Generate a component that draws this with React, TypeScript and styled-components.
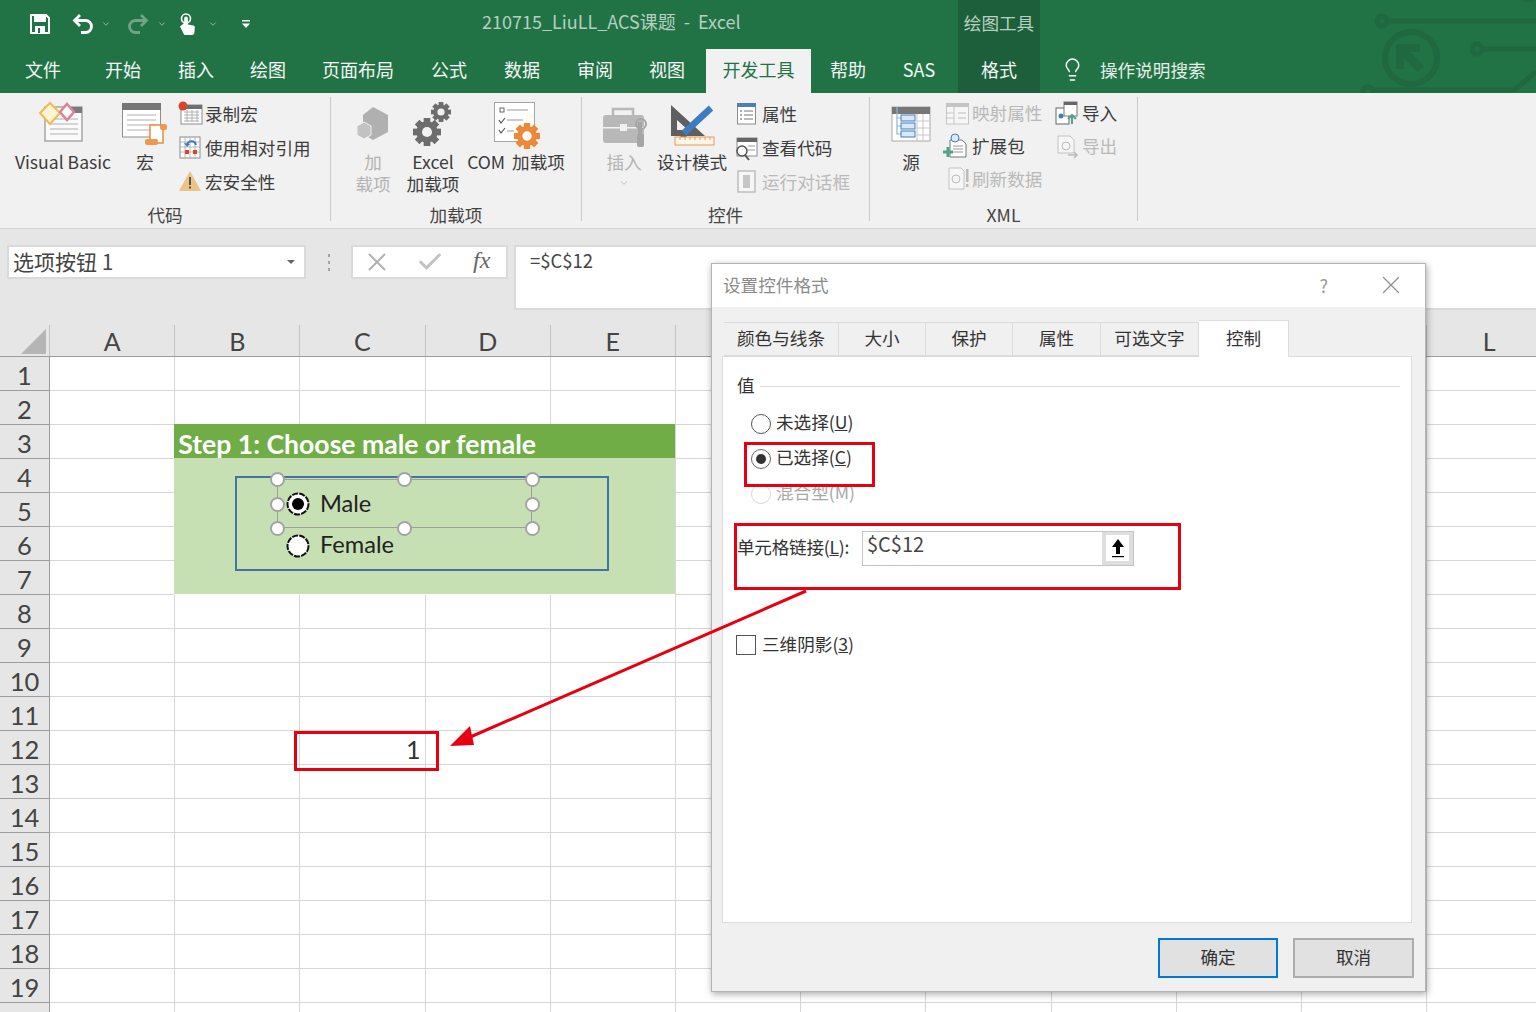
import React from "react";
import styled, { createGlobalStyle } from "styled-components";
import { Lightbulb, X, Check, ChevronDown } from "lucide-react";

const CJK = `"Noto Sans CJK SC", "Noto Sans", sans-serif`;
const SHEET = `Lato, "Noto Sans CJK SC", sans-serif`;

const Global = createGlobalStyle`
  html, body { margin: 0; padding: 0; background: #fff; }
  * { box-sizing: border-box; }
  body { font-family: ${CJK}; overflow: hidden; }
`;

const Page = styled.div`
  position: relative; width: 1536px; height: 1012px; overflow: hidden; background: #fff;
  display: flex; flex-direction: column;
`;

/* ---------- top bar ---------- */
const TopBar = styled.header`
  position: relative; height: 93px; background: #217346; color: #fff; flex: none;
`;
const Circuit = styled.svg`
  position: absolute; left: 1340px; top: 0; width: 196px; height: 93px;
`;
const TitleRow = styled.div`
  position: relative; display: flex; height: 47px;
`;
const Qat = styled.div`
  display: flex; align-items: center; width: 482px; padding-left: 30px;
`;
const QatSlot = styled.span<{ $ml?: number; $dim?: boolean }>`
  display: inline-flex; margin-left: ${p => p.$ml ?? 0}px; opacity: ${p => (p.$dim ? 0.35 : 1)};
`;
const DocTitle = styled.div`
  width: 476px; font-size: 18px; line-height: 47px; color: #b6cfc1; white-space: pre; margin-top: -2px;
`;
const ContextTitle = styled.div`
  width: 82px; background: #1c5f3a; text-align: center; font-size: 17.6px; line-height: 45px; color: #b9cfc2;
`;
const TabRow = styled.nav`
  position: relative; display: flex; height: 46px;
`;
const Tab = styled.div<{ $w?: number; $ml?: number; $active?: boolean; $context?: boolean }>`
  width: ${p => p.$w ?? 72}px; margin-left: ${p => p.$ml ?? 0}px;
  margin-top: ${p => (p.$active ? 2 : 0)}px;
  padding-bottom: ${p => (p.$active ? 4 : 2)}px;
  display: flex; align-items: center; justify-content: center;
  font-size: 18px; color: ${p => (p.$active ? "#217346" : "#f4f7f5")};
  background: ${p => (p.$active ? "#f1f1f1" : p.$context ? "#1c5f3a" : "transparent")};
`;
const TellMe = styled.div`
  display: flex; align-items: center; margin-left: 20px; gap: 15px; font-size: 17.6px; color: #e6eee9; padding-bottom: 2px;
`;

/* ---------- ribbon ---------- */
const Ribbon = styled.section`
  display: flex; height: 136px; flex: none; background: #f1f1f1; border-bottom: 1px solid #d3d3d3; padding-top: 4px;
`;
const Group = styled.div<{ $w: number }>`
  width: ${p => p.$w}px; height: 124px; border-right: 1px solid #c8c8c8; display: flex; flex-direction: column;
`;
const GroupBody = styled.div<{ $pl?: number }>`
  display: flex; flex: none; height: 104px; padding-left: ${p => p.$pl ?? 0}px;
`;
const GroupLabel = styled.div`
  flex: none; text-align: center; font-size: 17.6px; line-height: 24px; color: #444; margin-top: 2px;
`;
const LargeButton = styled.div<{ $w: number; $ml?: number; $off?: boolean; $wide?: boolean }>`
  width: ${p => p.$w}px; margin-left: ${p => p.$ml ?? 0}px; display: flex; flex-direction: column; align-items: center;
  font-size: 17.6px; line-height: 22px; text-align: center; white-space: nowrap; word-spacing: ${p => (p.$wide ? 3 : 0)}px;
  color: ${p => (p.$off ? "#b4b4b4" : "#3c3c3c")};
  svg { display: block; flex: none; }
`;
const MenuChevron = styled.span`
  display: inline-flex; margin-top: 5px;
`;
const SmallColumn = styled.div<{ $ml?: number; $w?: number }>`
  margin-left: ${p => p.$ml ?? 0}px; width: ${p => (p.$w ? `${p.$w}px` : "auto")}; flex: none;
`;
const SmallRow = styled.div<{ $h?: number; $off?: boolean }>`
  display: flex; align-items: center; gap: 1px; height: ${p => p.$h ?? 34}px; font-size: 17.6px; white-space: nowrap;
  padding-bottom: 2px; color: ${p => (p.$off ? "#b9b9b9" : "#3c3c3c")};
  svg { flex: none; margin-top: 2px; }
`;

/* ---------- formula bar ---------- */
const FormulaArea = styled.section`
  display: flex; align-items: flex-start; height: 96px; flex: none; background: #e6e6e6; padding: 16px 0 0 7px;
`;
const NameBox = styled.div`
  display: flex; align-items: center; justify-content: space-between; width: 299px; height: 34px; background: #fff;
  border: 2px solid #dadada; padding: 0 9px 2px 4px; font-size: 21px; color: #444; white-space: pre;
`;
const Caret = styled.span`
  width: 0; height: 0; border-left: 4px solid transparent; border-right: 4px solid transparent; border-top: 4px solid #666; margin-top: 2px;
`;
const Grip = styled.div`
  width: 45px; height: 34px; display: flex; flex-direction: column; align-items: center; justify-content: center; gap: 4px;
  i { width: 2px; height: 3px; background: #a5a5a5; display: block; }
`;
const FxBox = styled.div`
  display: flex; align-items: center; width: 157px; height: 34px; background: #fff; border: 2px solid #dadada; padding-left: 9px;
`;
const FxCheck = styled.span`
  display: inline-flex; margin: 0 29px 0 24px;
`;
const FxText = styled.span`
  font-family: "Liberation Serif", serif; font-style: italic; font-size: 24px; color: #666; padding-bottom: 4px;
`;
const FormulaInput = styled.div`
  flex: 1; margin-left: 6px; height: 65px; background: #fff; border: 2px solid #dadada; border-right: none; padding: 1px 0 0 14px;
  font-size: 18.5px; line-height: 24px; color: #444;
`;

/* ---------- sheet ---------- */
const Sheet = styled.main`
  flex: 1; font-family: ${SHEET}; overflow: hidden;
`;
const HeaderRow = styled.div`
  display: flex; height: 32px; background: #e6e6e6; border-bottom: 1px solid #9c9c9c;
`;
const Corner = styled.div`
  position: relative; flex: 0 0 50px; border-right: 1px solid #c4c4c4;
  &::after {
    content: ""; position: absolute; left: 21px; top: 4px; border-style: solid; border-width: 0 0 25px 25px;
    border-color: transparent transparent #b5b5b5 transparent;
  }
`;
const ColHead = styled.div<{ $first?: boolean }>`
  flex: 0 0 ${p => (p.$first ? 124.2 : 125.2)}px; border-left: ${p => (p.$first ? "none" : "1px solid #c4c4c4")};
  text-align: center; font-size: 25px; line-height: 32px; color: #444;
`;
const Row = styled.div`
  display: flex; height: 34px;
`;
const RowHead = styled.div`
  flex: 0 0 50px; background: #e6e6e6; border-right: 1px solid #9c9c9c; border-bottom: 1px solid #9c9c9c;
  text-align: center; font-size: 25.5px; line-height: 36px; color: #444;
`;
const Cell = styled.div<{ $first?: boolean }>`
  flex: 0 0 ${p => (p.$first ? 124.2 : 125.2)}px; background: #fff;
  border-left: ${p => (p.$first ? "none" : "1px solid #d6d6d6")};
  border-bottom: 1px solid #d6d6d6;
`;
const FilledCell = styled.div<{ $fill: string }>`
  flex: 0 0 500.8px; height: 34px; margin-top: -1px; background: ${p => p.$fill}; white-space: nowrap;
`;
const StepTitle = styled.div`
  color: #fff; font-weight: 700; font-size: 26.6px; line-height: 40px; padding-left: 4px;
`;
const NumberCell = styled.div`
  text-align: right; padding-right: 4px; font-size: 25px; line-height: 36px; color: #333;
`;

/* ---------- form controls on the sheet ---------- */
const FormFrame = styled.div`
  position: absolute; left: 235px; top: 476px; width: 374px; height: 95px; border: 2px solid #41749f;
`;
const SelectionFrame = styled.div`
  position: absolute; left: 277px; top: 479px; width: 255px; height: 49px; border: 1.5px solid #9f9f9f;
`;
const Handle = styled.span<{ $x: number; $y: number }>`
  position: absolute; left: ${p => p.$x - 7.5}px; top: ${p => p.$y - 7.5}px; width: 15px; height: 15px; border-radius: 50%;
  background: #fff; border: 2.5px solid #a3a3a3;
`;
const SheetRadio = styled.svg<{ $y: number }>`
  position: absolute; left: 286px; top: ${p => p.$y - 12}px; width: 24px; height: 24px;
`;
const SheetLabel = styled.span<{ $y: number }>`
  position: absolute; left: 320px; top: ${p => p.$y - 18}px; font-family: ${SHEET}; font-size: 23.6px; line-height: 34px; color: #222;
`;

/* ---------- dialog ---------- */
const Dialog = styled.div`
  position: absolute; left: 711px; top: 263px; width: 715px; height: 729px; background: #f0f0f0;
  border: 1px solid #b4b4b4; box-shadow: 1px 2px 7px rgba(0,0,0,.35); display: flex; flex-direction: column;
`;
const DialogTitle = styled.div`
  display: flex; align-items: center; height: 43px; background: #fff; padding: 0 0 2px 11px; font-size: 17.6px; color: #8b8b8b; flex: none;
`;
const DialogGlyphs = styled.div`
  margin-left: auto; display: flex; align-items: center; gap: 48px; padding-right: 19px; color: #9a9a9a; font-size: 18px;
`;
const DialogTabs = styled.div`
  display: flex; height: 35px; margin: 14px 0 0 12px; flex: none; align-items: flex-end;
`;
const DialogTab = styled.div<{ $w: number; $active?: boolean }>`
  width: ${p => p.$w}px; height: ${p => (p.$active ? 37 : 34)}px; display: flex; align-items: center; justify-content: center;
  background: ${p => (p.$active ? "#fff" : "#f0f0f0")}; font-size: 17.6px; color: #333; padding-bottom: 4px;
  border: 1px solid #dcdcdc; border-left: none; border-bottom: ${p => (p.$active ? "none" : "1px solid #dcdcdc")};
  position: relative; z-index: ${p => (p.$active ? 1 : 0)}; margin-bottom: ${p => (p.$active ? -1 : 0)}px;
`;
const Panel = styled.div`
  height: 567px; margin: 0 13px 0 10px; background: #fff; border: 1px solid #dcdcdc; padding: 17px 11px 0 14px; flex: none;
`;
const Legend = styled.div`
  display: flex; align-items: center; gap: 5px; height: 24px; font-size: 17.6px; color: #333;
  span { margin-bottom: 4px; }
  &::after { content: ""; flex: 1; height: 1px; background: #dcdcdc; }
`;
const RadioList = styled.div`
  margin: 8px 0 0 14px;
`;
const RadioRow = styled.div<{ $off?: boolean }>`
  display: flex; align-items: center; gap: 5px; height: 35px; font-size: 17.6px; color: ${p => (p.$off ? "#a8a8a8" : "#333")};
  span:last-child { margin-bottom: 4px; }
`;
const RadioDot = styled.span<{ $on?: boolean; $off?: boolean }>`
  width: 20px; height: 20px; border-radius: 50%; background: #fff; flex: none;
  border: 1.5px solid ${p => (p.$off ? "#d8d8d8" : p.$on ? "#666" : "#555")};
  display: flex; align-items: center; justify-content: center;
  &::after { content: ""; width: 10px; height: 10px; border-radius: 50%; background: ${p => (p.$on ? "#333" : "transparent")}; }
`;
const LinkRow = styled.div`
  display: flex; align-items: center; margin-top: 20px; height: 35px; font-size: 17.6px; color: #333; white-space: nowrap;
`;
const LinkLabel = styled.span`
  width: 125px; flex: none; margin-bottom: 4px; letter-spacing: -0.25px;
`;
const LinkInput = styled.div`
  display: flex; width: 272px; height: 35px; border: 1.5px solid #c4c4c4; background: #fff; font-size: 20px; line-height: 24px;
`;
const LinkValue = styled.span`
  flex: 1; padding-left: 4px; color: #444;
`;
const PickButton = styled.span`
  width: 31px; background: #fff; border: 4px solid #dedede; border-top-width: 3px; display: flex; align-items: center; justify-content: center;
`;
const CheckRow = styled.div`
  display: flex; align-items: center; gap: 6px; margin: 69px 0 0 -1px; height: 20px; font-size: 17.6px; color: #333;
  span:last-child { margin-bottom: 3px; }
`;
const CheckBox = styled.span`
  width: 20px; height: 20px; background: #fff; border: 1.5px solid #555; flex: none;
`;
const DialogFooter = styled.div`
  display: flex; justify-content: flex-end; gap: 15px; padding: 15px 11px 0 0;
`;
const DialogButton = styled.div<{ $primary?: boolean; $w: number }>`
  width: ${p => p.$w}px; height: 40px; display: flex; align-items: center; justify-content: center; background: #e1e1e1; padding-bottom: 3px;
  border: 2px solid ${p => (p.$primary ? "#0078d7" : "#adadad")}; font-size: 17.6px; color: #333;
`;

/* ---------- annotations ---------- */
const RedBox = styled.div<{ $x: number; $y: number; $w: number; $h: number }>`
  position: absolute; left: ${p => p.$x}px; top: ${p => p.$y}px; width: ${p => p.$w}px; height: ${p => p.$h}px;
  border: 3px solid #e60012; pointer-events: none;
`;
const ArrowLayer = styled.svg`
  position: absolute; left: 0; top: 0; width: 1536px; height: 1012px; pointer-events: none;
`;

/* ---------- icon helpers: drawn in page coordinates ---------- */
const Ic: React.FC<{ x: number; y: number; w: number; h: number; children: React.ReactNode }> = ({ x, y, w, h, children }) => (
  <svg width={w} height={h} viewBox={`${x} ${y} ${w} ${h}`} style={{ overflow: "visible" }}>{children}</svg>
);
const Gear: React.FC<{ cx: number; cy: number; r: number; fill: string; hole: string }> = ({ cx, cy, r, fill, hole }) => (
  <g>
    {[0, 45, 90, 135].map(a => (
      <rect key={a} x={cx - r * 0.24} y={cy - r} width={r * 0.48} height={r * 2} fill={fill} transform={`rotate(${a} ${cx} ${cy})`} />
    ))}
    <circle cx={cx} cy={cy} r={r * 0.76} fill={fill} />
    <circle cx={cx} cy={cy} r={r * 0.36} fill={hole} />
  </g>
);
const Lines: React.FC<{ x1: number; x2: number; ys: number[]; c?: string }> = ({ x1, x2, ys, c = "#b0b0b0" }) => (
  <>{ys.map(y => <line key={y} x1={x1} x2={x2} y1={y} y2={y} stroke={c} strokeWidth="1" />)}</>
);
const QatChevron = () => <ChevronDown size={10} strokeWidth={2} color="#a9c5b5" />;

const SaveIcon = () => (
  <svg width="20" height="20" viewBox="0 0 20 20">
    <path d="M1 1h15l3 3v15H1z" fill="none" stroke="#fff" strokeWidth="2" />
    <rect x="4" y="2" width="12" height="6" fill="#fff" />
    <rect x="5" y="12" width="10" height="7" fill="#fff" />
    <rect x="8" y="14" width="2" height="5" fill="#217346" />
  </svg>
);
const UndoIcon = () => (
  <svg width="22" height="22" viewBox="0 0 22 22">
    <path d="M8 2L2.5 7.5 8 13M3 7.5h10.5a6 6 0 0 1 0 12H9" fill="none" stroke="#fff" strokeWidth="2.8" />
  </svg>
);
const RedoIcon = () => (
  <svg width="22" height="22" viewBox="0 0 22 22">
    <path d="M14 2l5.5 5.5L14 13M19 7.5H8.500a6 6 0 0 0 0 12H13" fill="none" stroke="#fff" strokeWidth="2.8" />
  </svg>
);
const TouchIcon = () => (
  <svg width="18" height="22" viewBox="0 0 18 22">
    <circle cx="8" cy="5.5" r="4.5" fill="none" stroke="#fff" strokeWidth="1.6" />
    <rect x="6.2" y="3.5" width="3.6" height="11" rx="1.8" fill="#fff" />
    <path d="M6.200 10L2 13.500 5.500 20.500c.4 1 1.200 1.500 2.200 1.500h6.300c1.300 0 2.300-1 2.400-2.200l.4-5.300c.1-1-.5-1.800-1.500-2l-5.500-1z" fill="#fff" />
  </svg>
);

const tabs = [
  { t: "文件", ml: 7 }, { t: "开始", ml: 8 }, { t: "插入", ml: 1 }, { t: "绘图" }, { t: "页面布局", w: 90, ml: 9 },
  { t: "公式", ml: 10 }, { t: "数据", ml: 1 }, { t: "审阅", ml: 1 }, { t: "视图" },
];
const columns = "ABCDEFGHIJKL".split("");
const rows = Array.from({ length: 20 }, (_, i) => i + 1);
const handles: [number, number][] = [[277, 479], [404, 479], [532, 479], [277, 504], [532, 504], [277, 528], [404, 528], [532, 528]];

const SheetRow: React.FC<{ n: number }> = ({ n }) => {
  const filled = n >= 3 && n <= 7;
  return (
    <Row>
      <RowHead>{n < 20 ? n : null}</RowHead>
      <Cell $first />
      {filled ? (
        <FilledCell $fill={n === 3 ? "#70ad47" : "#c6e0b4"}>
          {n === 3 && <StepTitle>Step 1: Choose male or female</StepTitle>}
        </FilledCell>
      ) : (
        <>
          <Cell />
          <Cell>{n === 12 && <NumberCell>1</NumberCell>}</Cell>
          <Cell />
          <Cell />
        </>
      )}
      {columns.slice(5).map(c => <Cell key={c} />)}
    </Row>
  );
};

const RadioMark: React.FC<{ y: number; on?: boolean }> = ({ y, on }) => (
  <SheetRadio $y={y} viewBox="0 0 24 24">
    <circle cx="12" cy="12" r="10.5" fill="#fff" stroke="#111" strokeWidth="2" strokeDasharray="6 1.2" />
    {on && <circle cx="12" cy="12" r="6" fill="#000" />}
  </SheetRadio>
);

export default function App() {
  return (
    <Page>
      <Global />
      <TopBar>
        <Circuit viewBox="1340 0 196 93">
          <g fill="none" stroke="#1f6840" strokeWidth="5">
            <circle cx="1382" cy="21" r="5" />
            <path d="M1387 21H1536" />
            <circle cx="1477" cy="49" r="5" />
            <path d="M1482 49H1536" />
            <circle cx="1368" cy="92" r="5" />
            <path d="M1373 90H1514L1536 72" />
            <circle cx="1411" cy="58" r="26" strokeWidth="6" />
            <circle cx="1528" cy="-9" r="9" />
          </g>
          <path d="M1396 44h24v8h-10l14 14-6 6-14-14v11h-8z" fill="#1f6840" />
        </Circuit>
        <TitleRow>
          <Qat>
            <QatSlot><SaveIcon /></QatSlot>
            <QatSlot $ml={22}><UndoIcon /></QatSlot>
            <QatSlot $ml={7}><QatChevron /></QatSlot>
            <QatSlot $ml={16} $dim><RedoIcon /></QatSlot>
            <QatSlot $ml={8}><QatChevron /></QatSlot>
            <QatSlot $ml={11}><TouchIcon /></QatSlot>
            <QatSlot $ml={12}><QatChevron /></QatSlot>
            <QatSlot $ml={23}>
              <svg width="10" height="10" viewBox="0 0 10 10"><rect x="1" y="1" width="8" height="1.5" fill="#fff" /><path d="M1 4.5h8L5 9z" fill="#fff" /></svg>
            </QatSlot>
          </Qat>
          <DocTitle>{"210715_LiuLL_ACS课题  -  Excel"}</DocTitle>
          <ContextTitle>绘图工具</ContextTitle>
        </TitleRow>
        <TabRow>
          {tabs.map(t => <Tab key={t.t} $w={t.w} $ml={t.ml}>{t.t}</Tab>)}
          <Tab $w={105} $ml={3} $active>开发工具</Tab>
          <Tab $ml={1}>帮助</Tab>
          <Tab $w={70}>SAS</Tab>
          <Tab $w={82} $ml={4} $context>格式</Tab>
          <TellMe>
            <Lightbulb size={25} strokeWidth={1.4} color="#fff" />
            操作说明搜索
          </TellMe>
        </TabRow>
      </TopBar>

      <Ribbon>
        <Group $w={331}>
          <GroupBody $pl={5}>
            <LargeButton $w={116}>
              <Ic x={5} y={97} w={116} h={54}>
                <rect x="45" y="107" width="37" height="34" fill="#fafafa" stroke="#a6a6a6" strokeWidth="1.5" />
                <rect x="68" y="107" width="14" height="6" fill="#7a7a7a" />
                <Lines x1={50} x2={78} ys={[119, 124, 129, 134]} />
                <polygon points="50,103 60,113 50,124 40,113" fill="#fff4d2" stroke="#eabc58" strokeWidth="2" />
                <polygon points="67,104 74,112 67,120 60,112" fill="#fff" stroke="#e27f99" strokeWidth="2.5" />
              </Ic>
              Visual Basic
            </LargeButton>
            <LargeButton $w={48}>
              <Ic x={121} y={97} w={48} h={54}>
                <rect x="122.5" y="104" width="38" height="33" fill="#fff" stroke="#8f8f8f" />
                <rect x="122" y="103" width="39" height="7" fill="#767676" />
                <Lines x1={127} x2={156} ys={[115, 120, 125, 130]} />
                <rect x="150" y="125" width="13" height="18" fill="#fff" stroke="#ed8b3c" strokeWidth="1.5" />
                <rect x="145" y="139" width="13" height="6" rx="2" fill="#ed9a4d" />
                <rect x="160" y="124" width="7" height="6" rx="2" fill="#ed9a4d" />
              </Ic>
              宏
            </LargeButton>
            <SmallColumn $ml={9}>
              <SmallRow>
                <Ic x={178} y={97} w={26} h={34}>
                  <rect x="181" y="105" width="21" height="19" fill="#fff" stroke="#8c8c8c" />
                  <rect x="181" y="105" width="21" height="4" fill="#6f6f6f" />
                  <Lines x1={184} x2={199} ys={[112, 115, 118, 121]} />
                  <path d="M187 110v12M192 110v12M197 110v12" stroke="#b0b0b0" />
                  <circle cx="183" cy="106" r="4.5" fill="#d8452a" />
                </Ic>
                录制宏
              </SmallRow>
              <SmallRow>
                <Ic x={178} y={131} w={26} h={34}>
                  <rect x="180" y="137" width="20" height="21" fill="#fff" stroke="#8c8c8c" />
                  <path d="M185 137v21M190 137v21M195 137v21M180 142h20M180 147h20M180 152h20" stroke="#a8a8a8" strokeWidth=".8" />
                  <rect x="185" y="150" width="4" height="4" fill="#d8452a" />
                  <rect x="193" y="150" width="4" height="4" fill="#d8452a" />
                  <path d="M187 145c1-5 8-5 9 0" fill="none" stroke="#3e7cc0" strokeWidth="2" />
                  <path d="M184 143l3 4 3-3z" fill="#3e7cc0" />
                </Ic>
                使用相对引用
              </SmallRow>
              <SmallRow>
                <Ic x={178} y={165} w={26} h={34}>
                  <path d="M190 171l11 20h-22z" fill="#eac488" />
                  <rect x="189" y="177" width="2" height="8" fill="#555" />
                  <rect x="189" y="186.5" width="2" height="2" fill="#555" />
                </Ic>
                宏安全性
              </SmallRow>
            </SmallColumn>
          </GroupBody>
          <GroupLabel>代码</GroupLabel>
        </Group>

        <Group $w={251}>
          <GroupBody $pl={20}>
            <LargeButton $w={44} $off>
              <Ic x={351} y={97} w={44} h={54}>
                <path d="M373 107l15 8v17l-15 8-10-6v-19z" fill="#b0b0b0" />
                <path d="M364 122l7 4v9l-7 4-7-4v-9z" fill="#c2c2c2" stroke="#f1f1f1" />
              </Ic>
              加<br />载项
            </LargeButton>
            <LargeButton $w={60} $ml={8}>
              <Ic x={403} y={97} w={60} h={54}>
                <Gear cx={427} cy={132} r={14} fill="#6d6d6d" hole="#f1f1f1" />
                <Gear cx={441} cy={112} r={10} fill="#6d6d6d" hole="#f1f1f1" />
              </Ic>
              Excel<br />加载项
            </LargeButton>
            <LargeButton $w={106} $wide>
              <Ic x={463} y={97} w={106} h={54}>
                <rect x="494.5" y="102.5" width="40" height="39" fill="#fff" stroke="#a5a5a5" />
                <rect x="500" y="108" width="4" height="4" fill="none" stroke="#666" />
                <Lines x1={507} x2={528} ys={[110]} c="#999" />
                <path d="M499 120l2 3 4-5M499 130l2 3 4-5" fill="none" stroke="#555" strokeWidth="1.2" />
                <Lines x1={507} x2={523} ys={[120]} c="#999" />
                <Lines x1={507} x2={514} ys={[131]} c="#999" />
                <Gear cx={527} cy={136} r={13} fill="#ed8936" hole="#fff" />
              </Ic>
              COM 加载项
            </LargeButton>
          </GroupBody>
          <GroupLabel>加载项</GroupLabel>
        </Group>

        <Group $w={288}>
          <GroupBody $pl={16}>
            <LargeButton $w={52} $off>
              <Ic x={598} y={97} w={52} h={54}>
                <rect x="603" y="115" width="41" height="28" rx="3" fill="#b8b8b8" />
                <path d="M613 115v-6h20v6" fill="none" stroke="#b8b8b8" strokeWidth="2.5" />
                <rect x="603" y="127" width="41" height="1.5" fill="#f1f1f1" />
                <rect x="620" y="124" width="7" height="7" fill="#f1f1f1" />
                <path d="M640 122v16" stroke="#a5a5a5" strokeWidth="4" />
                <circle cx="641" cy="124" r="5" fill="none" stroke="#a5a5a5" strokeWidth="2" />
                <rect x="637" y="134" width="7" height="13" rx="2" fill="#a5a5a5" />
              </Ic>
              插入
              <MenuChevron><ChevronDown size={10} color="#b4b4b4" /></MenuChevron>
            </LargeButton>
            <LargeButton $w={80} $ml={2}>
              <Ic x={652} y={97} w={80} h={54}>
                <path fillRule="evenodd" d="M671 105l34 31h-34zM677 120v10h11z" fill="#5f5f5f" />
                <path d="M684 133l27-25" stroke="#3e7cc0" strokeWidth="6.5" />
                <path d="M679 141l3-9 6 6z" fill="#5f5f5f" />
                <rect x="675" y="137" width="39" height="8" fill="#fff4e8" stroke="#ec9a55" />
                <path d="M680 137v3M685 137v3M690 137v3M695 137v3M700 137v3M705 137v3M710 137v3" stroke="#ec9a55" />
              </Ic>
              设计模式
            </LargeButton>
            <SmallColumn $ml={3}>
              <SmallRow>
                <Ic x={735} y={97} w={26} h={34}>
                  <rect x="737.5" y="104" width="18" height="20" fill="#fff" stroke="#8c8c8c" />
                  <rect x="737" y="103" width="19" height="4" fill="#4c7fb8" />
                  <Lines x1={744} x2={753} ys={[111, 115, 119]} c="#777" />
                  <path d="M740 111h2M740 115h2M740 119h2" stroke="#555" />
                </Ic>
                属性
              </SmallRow>
              <SmallRow>
                <Ic x={735} y={131} w={26} h={34}>
                  <rect x="737" y="138" width="20" height="18" fill="#fff" stroke="#8c8c8c" />
                  <rect x="737" y="138" width="20" height="4" fill="#666" />
                  <Lines x1={748} x2={755} ys={[146, 150]} c="#999" />
                  <circle cx="742" cy="151" r="5" fill="#fff" stroke="#555" strokeWidth="1.5" />
                  <path d="M745 155l4 5" stroke="#555" strokeWidth="2" />
                </Ic>
                查看代码
              </SmallRow>
              <SmallRow $off>
                <Ic x={735} y={165} w={26} h={34}>
                  <rect x="738" y="171" width="17" height="21" fill="#f6f6f6" stroke="#bdbdbd" strokeWidth="1.5" />
                  <rect x="743" y="175" width="7" height="13" fill="#c6c6c6" />
                </Ic>
                运行对话框
              </SmallRow>
            </SmallColumn>
          </GroupBody>
          <GroupLabel>控件</GroupLabel>
        </Group>

        <Group $w={268}>
          <GroupBody $pl={15}>
            <LargeButton $w={52}>
              <Ic x={885} y={97} w={52} h={54}>
                <rect x="892" y="107" width="38" height="34" fill="#fff" stroke="#aaa" />
                <rect x="892" y="107" width="38" height="7" fill="#777" />
                <path d="M917 114v27M923 114v27M917 121h13M917 128h13M917 135h13" stroke="#c8c8c8" />
                <path d="M897 107v27h4M897 118h4M897 126h4" fill="none" stroke="#8fb4da" strokeWidth="1.2" />
                <rect x="901" y="115" width="14" height="6" fill="#dbe8f5" stroke="#3f7fc1" />
                <rect x="901" y="123" width="14" height="6" fill="#dbe8f5" stroke="#3f7fc1" />
                <rect x="901" y="131" width="14" height="6" fill="#dbe8f5" stroke="#3f7fc1" />
              </Ic>
              源
            </LargeButton>
            <SmallColumn $ml={8} $w={110}>
              <SmallRow $h={33} $off>
                <Ic x={945} y={97} w={26} h={33}>
                  <rect x="946.5" y="104" width="22" height="20" fill="#f6f6f6" stroke="#c6c6c6" />
                  <rect x="946" y="103" width="23" height="4" fill="#c4c4c4" />
                  <path d="M954 107v17M946 113h8M946 118h8" stroke="#c6c6c6" />
                  <path d="M958 113h8M958 118h8" stroke="#bbb" />
                </Ic>
                映射属性
              </SmallRow>
              <SmallRow $h={33}>
                <Ic x={945} y={130} w={26} h={33}>
                  <path d="M950 140h12l4 4v13h-16z" fill="#fff" stroke="#777" />
                  <Lines x1={953} x2={963} ys={[146, 149, 152]} c="#999" />
                  <circle cx="955" cy="138" r="4" fill="#dbe8f5" stroke="#3f7fc1" />
                  <path d="M948 147v10M943 152h10" stroke="#55a18a" strokeWidth="3" />
                </Ic>
                扩展包
              </SmallRow>
              <SmallRow $h={33} $off>
                <Ic x={945} y={163} w={26} h={33}>
                  <path d="M949 168h12l3 3v18h-15z" fill="#f6f6f6" stroke="#c2c2c2" />
                  <circle cx="956" cy="179" r="4" fill="none" stroke="#bbb" />
                  <rect x="966" y="169" width="2.5" height="13" fill="#bbb" />
                  <rect x="966" y="184" width="2.5" height="3" fill="#bbb" />
                </Ic>
                刷新数据
              </SmallRow>
            </SmallColumn>
            <SmallColumn>
              <SmallRow $h={33}>
                <Ic x={1055} y={97} w={26} h={33}>
                  <rect x="1056" y="108" width="13" height="16" fill="#fff" stroke="#666" />
                  <rect x="1064" y="102" width="13" height="14" fill="#fff" stroke="#777" />
                  <rect x="1064" y="102" width="13" height="3" fill="#666" />
                  <circle cx="1061" cy="116" r="2.5" fill="#3f7fc1" />
                  <path d="M1072 124v-8M1068 119l4-4 4 4" fill="none" stroke="#55a18a" strokeWidth="2" />
                </Ic>
                导入
              </SmallRow>
              <SmallRow $h={33} $off>
                <Ic x={1055} y={130} w={26} h={33}>
                  <path d="M1058 136h12l4 4v13h-16z" fill="#f6f6f6" stroke="#c2c2c2" />
                  <circle cx="1066" cy="146" r="4" fill="none" stroke="#bbb" />
                  <path d="M1068 155h9M1074 152l3 3-3 3" fill="none" stroke="#bbb" strokeWidth="1.5" />
                </Ic>
                导出
              </SmallRow>
            </SmallColumn>
          </GroupBody>
          <GroupLabel>XML</GroupLabel>
        </Group>
      </Ribbon>

      <FormulaArea>
        <NameBox>选项按钮 1<Caret /></NameBox>
        <Grip><i /><i /><i /></Grip>
        <FxBox>
          <X size={30} strokeWidth={1.5} color="#b0b0b0" />
          <FxCheck><Check size={28} strokeWidth={2.6} color="#c4c4c4" /></FxCheck>
          <FxText>fx</FxText>
        </FxBox>
        <FormulaInput>=$C$12</FormulaInput>
      </FormulaArea>

      <Sheet>
        <HeaderRow>
          <Corner />
          {columns.map((c, i) => <ColHead key={c} $first={i === 0}>{c}</ColHead>)}
        </HeaderRow>
        {rows.map(n => <SheetRow key={n} n={n} />)}
      </Sheet>

      <FormFrame />
      <SelectionFrame />
      {handles.map(([x, y]) => <Handle key={`${x}-${y}`} $x={x} $y={y} />)}
      <RadioMark y={504} on />
      <SheetLabel $y={504}>Male</SheetLabel>
      <RadioMark y={546} />
      <SheetLabel $y={545}>Female</SheetLabel>

      <Dialog>
        <DialogTitle>
          设置控件格式
          <DialogGlyphs>
            <span>?</span>
            <X size={30} strokeWidth={1} color="#8f8f8f" />
          </DialogGlyphs>
        </DialogTitle>
        <DialogTabs>
          <DialogTab $w={115}>颜色与线条</DialogTab>
          <DialogTab $w={87}>大小</DialogTab>
          <DialogTab $w={87}>保护</DialogTab>
          <DialogTab $w={88}>属性</DialogTab>
          <DialogTab $w={98}>可选文字</DialogTab>
          <DialogTab $w={90} $active>控制</DialogTab>
        </DialogTabs>
        <Panel>
          <Legend><span>值</span></Legend>
          <RadioList>
            <RadioRow><RadioDot /><span>未选择(<u>U</u>)</span></RadioRow>
            <RadioRow><RadioDot $on /><span>已选择(<u>C</u>)</span></RadioRow>
            <RadioRow $off><RadioDot $off /><span>混合型(M)</span></RadioRow>
          </RadioList>
          <LinkRow>
            <LinkLabel>单元格链接(<u>L</u>):</LinkLabel>
            <LinkInput>
              <LinkValue>$C$12</LinkValue>
              <PickButton>
                <svg width="16" height="20" viewBox="0 0 16 20">
                  <path d="M8 1l6 8h-4v7H6V9H2z" fill="#000" />
                  <rect x="2" y="18" width="12" height="1.2" fill="#000" />
                </svg>
              </PickButton>
            </LinkInput>
          </LinkRow>
          <CheckRow><CheckBox /><span>三维阴影(<u>3</u>)</span></CheckRow>
        </Panel>
        <DialogFooter>
          <DialogButton $primary $w={120}>确定</DialogButton>
          <DialogButton $w={121}>取消</DialogButton>
        </DialogFooter>
      </Dialog>

      <RedBox $x={744} $y={442} $w={131} $h={45} />
      <RedBox $x={734} $y={523} $w={447} $h={67} />
      <RedBox $x={294} $y={731} $w={145} $h={40} />
      <ArrowLayer viewBox="0 0 1536 1012">
        <line x1="806" y1="591" x2="468" y2="738" stroke="#e60012" strokeWidth="3" />
        <polygon points="450,746 470,726 474,745" fill="#e60012" />
      </ArrowLayer>
    </Page>
  );
}
